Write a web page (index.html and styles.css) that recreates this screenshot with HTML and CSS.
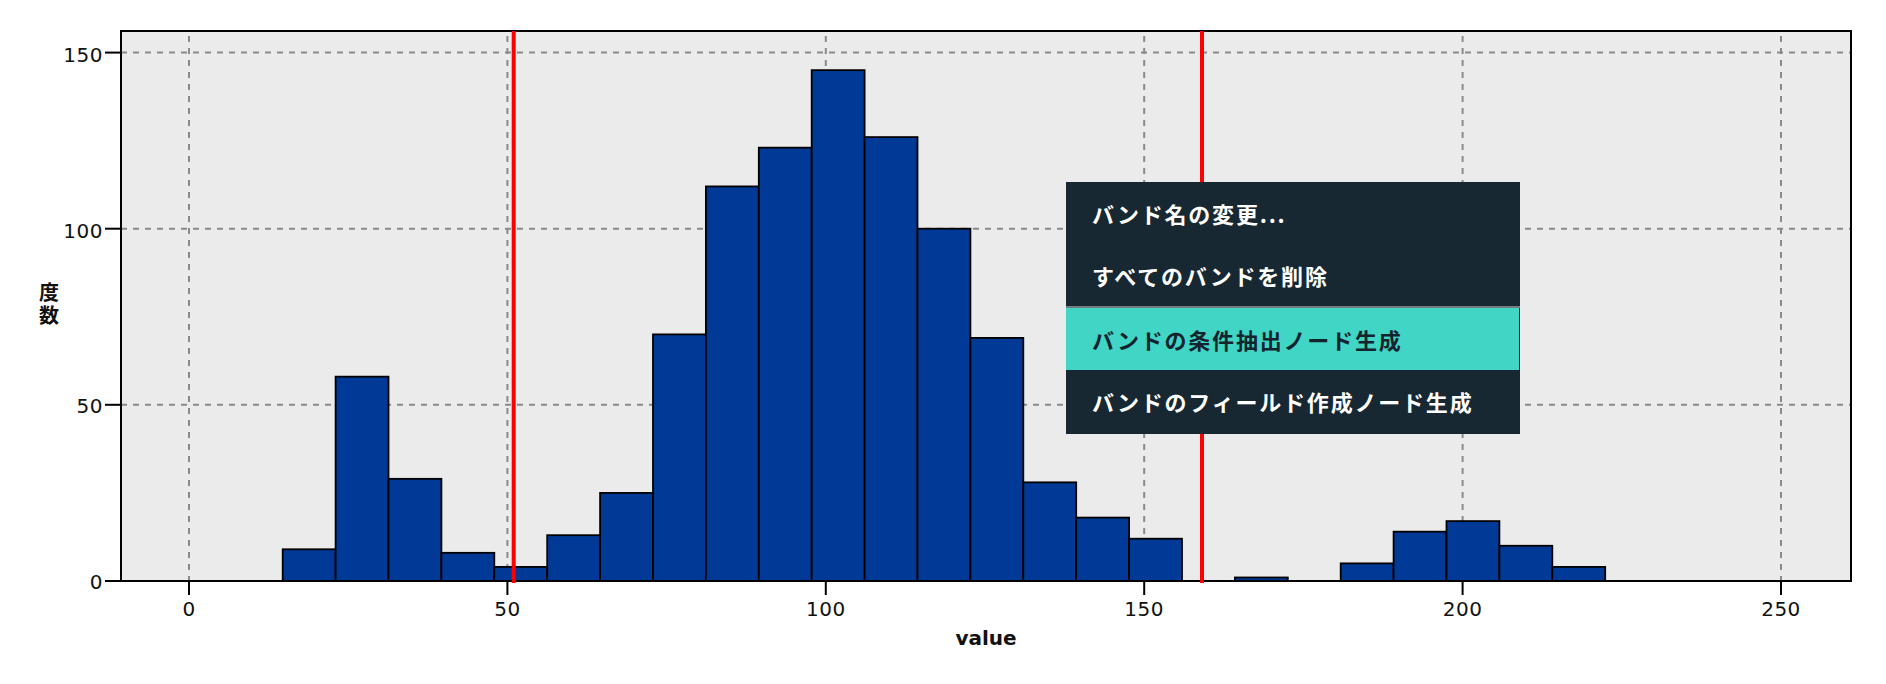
FILE: index.html
```html
<!DOCTYPE html>
<html lang="ja">
<head>
<meta charset="utf-8">
<title>Histogram</title>
<link rel="stylesheet" href="styles.css">
</head>
<body>
<div class="stage">
  <svg class="chart" width="1886" height="684" viewBox="0 0 1886 684" xmlns="http://www.w3.org/2000/svg">
    <rect class="plot-bg" x="121" y="31" width="1730" height="550"/>
    <g class="grid">
      <line x1="121" y1="404.8" x2="1851" y2="404.8"/>
      <line x1="121" y1="228.7" x2="1851" y2="228.7"/>
      <line x1="121" y1="52.6" x2="1851" y2="52.6"/>
      <line x1="189" y1="36" x2="189" y2="581"/>
      <line x1="507.4" y1="36" x2="507.4" y2="581"/>
      <line x1="825.8" y1="36" x2="825.8" y2="581"/>
      <line x1="1144.2" y1="36" x2="1144.2" y2="581"/>
      <line x1="1462.6" y1="36" x2="1462.6" y2="581"/>
      <line x1="1781" y1="36" x2="1781" y2="581"/>
    </g>
    <g class="bars" id="bars"></g>
    <rect class="plot-frame" x="121" y="31" width="1730" height="550"/>
    <g class="ticks">
      <line x1="105" y1="581" x2="121" y2="581"/>
      <line x1="105" y1="404.8" x2="121" y2="404.8"/>
      <line x1="105" y1="228.7" x2="121" y2="228.7"/>
      <line x1="105" y1="52.6" x2="121" y2="52.6"/>
      <line x1="189" y1="581" x2="189" y2="595"/>
      <line x1="507.4" y1="581" x2="507.4" y2="595"/>
      <line x1="825.8" y1="581" x2="825.8" y2="595"/>
      <line x1="1144.2" y1="581" x2="1144.2" y2="595"/>
      <line x1="1462.6" y1="581" x2="1462.6" y2="595"/>
      <line x1="1781" y1="581" x2="1781" y2="595"/>
    </g>
    <g class="ylabels">
      <text x="103" y="589">0</text>
      <text x="103" y="413">50</text>
      <text x="103" y="238">100</text>
      <text x="103" y="62">150</text>
    </g>
    <g class="xlabels">
      <text x="189" y="616">0</text>
      <text x="507.4" y="616">50</text>
      <text x="825.8" y="616">100</text>
      <text x="1144.2" y="616">150</text>
      <text x="1462.6" y="616">200</text>
      <text x="1781" y="616">250</text>
    </g>
    <text class="xtitle" x="986" y="645">value</text>
    <text class="ytitle" x="49" y="282">度数</text>
    <line class="band-line" x1="513.7" y1="31" x2="513.7" y2="583"/>
    <line class="band-line" x1="1202" y1="31" x2="1202" y2="583"/>
  </svg>

  <ul class="menu">
    <li class="menu-item">バンド名の変更...</li>
    <li class="menu-item">すべてのバンドを削除</li>
    <li class="menu-sep"></li>
    <li class="menu-item is-active">バンドの条件抽出ノード生成</li>
    <li class="menu-item">バンドのフィールド作成ノード生成</li>
  </ul>
</div>
<script>
  (function () {
    var counts = [9,58,29,8,4,13,25,70,112,123,145,126,100,69,28,18,12,0,1,0,5,14,17,10,4];
    var g = document.getElementById('bars');
    var ns = 'http://www.w3.org/2000/svg';
    var x0 = 282.7, w = 52.9, base = 581, k = 3.523;
    counts.forEach(function (c, i) {
      if (!c) return;
      var r = document.createElementNS(ns, 'rect');
      var h = c * k;
      r.setAttribute('x', (x0 + i * w).toFixed(2));
      r.setAttribute('y', (base - h).toFixed(2));
      r.setAttribute('width', w.toFixed(2));
      r.setAttribute('height', h.toFixed(2));
      g.appendChild(r);
    });
  })();
</script>
</body>
</html>
```
FILE: styles.css
```css
html, body {
  margin: 0;
  padding: 0;
  background: #ffffff;
}

.stage {
  position: relative;
  width: 1886px;
  height: 684px;
  overflow: hidden;
  font-family: "DejaVu Sans", "Noto Sans CJK JP", sans-serif;
}

.chart {
  display: block;
}

.plot-bg {
  fill: #ebebeb;
  stroke: none;
}

.plot-frame {
  fill: none;
  stroke: #000000;
  stroke-width: 2;
}

.grid line {
  stroke: #8a8a8a;
  stroke-width: 2;
  stroke-dasharray: 6 6;
}

.bars rect {
  fill: #003a96;
  stroke: #000000;
  stroke-width: 1.8;
}

.ticks line {
  stroke: #000000;
  stroke-width: 2;
}

.ylabels text,
.xlabels text {
  font-family: "DejaVu Sans", sans-serif;
  font-size: 20px;
  letter-spacing: 0.5px;
  fill: #111111;
}

.ylabels text {
  text-anchor: end;
}

.xlabels text {
  text-anchor: middle;
}

.xtitle {
  font-family: "DejaVu Sans", sans-serif;
  font-weight: bold;
  font-size: 20px;
  text-anchor: middle;
  fill: #111111;
}

.ytitle {
  font-family: "Noto Sans CJK JP", sans-serif;
  font-weight: bold;
  font-size: 20px;
  writing-mode: vertical-rl;
  letter-spacing: 3px;
  fill: #111111;
}

.band-line {
  stroke: #ff0000;
  stroke-width: 4;
}

.menu {
  position: absolute;
  left: 1066px;
  top: 182px;
  width: 454px;
  margin: 0;
  padding: 0 0 2px 0;
  list-style: none;
  background: #172833;
  font-family: "Noto Sans CJK JP", sans-serif;
  font-weight: bold;
  font-size: 22px;
  letter-spacing: 1.8px;
}

.menu-item {
  display: flex;
  align-items: center;
  height: 62px;
  padding-left: 26px;
  color: #ffffff;
  white-space: nowrap;
}

.menu-item.is-active {
  background: #40d5c5;
  color: #14242f;
  margin-right: 1px;
}

.menu-sep {
  height: 2px;
  background: #767b7d;
}
```
